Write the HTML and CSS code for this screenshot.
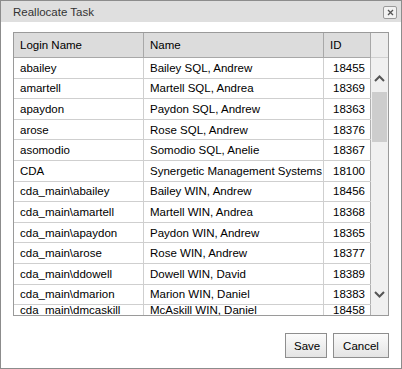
FILE: index.html
```html
<!DOCTYPE html>
<html>
<head>
<meta charset="utf-8">
<link rel="stylesheet" href="styles.css">
</head>
<body>
<div class="dialog">
  <div class="titlebar">
    <span class="title">Reallocate Task</span>
    <button class="close" aria-label="Close">
      <svg width="7" height="7" viewBox="0 0 7 7"><path d="M1 1L6 6M6 1L1 6" stroke="#555" stroke-width="1.3" fill="none"/></svg>
    </button>
  </div>
  <div class="content">
    <div class="grid">
      <div class="grid-main">
        <div class="row head">
          <div class="c c-login">Login Name</div>
          <div class="c c-name">Name</div>
          <div class="c c-id head-id">ID</div>
        </div>
        <div class="body">
          <div class="row"><div class="c c-login">abailey</div><div class="c c-name">Bailey SQL, Andrew</div><div class="c c-id">18455</div></div>
          <div class="row"><div class="c c-login">amartell</div><div class="c c-name">Martell SQL, Andrea</div><div class="c c-id">18369</div></div>
          <div class="row"><div class="c c-login">apaydon</div><div class="c c-name">Paydon SQL, Andrew</div><div class="c c-id">18363</div></div>
          <div class="row"><div class="c c-login">arose</div><div class="c c-name">Rose SQL, Andrew</div><div class="c c-id">18376</div></div>
          <div class="row"><div class="c c-login">asomodio</div><div class="c c-name">Somodio SQL, Anelie</div><div class="c c-id">18367</div></div>
          <div class="row"><div class="c c-login">CDA</div><div class="c c-name">Synergetic Management Systems</div><div class="c c-id">18100</div></div>
          <div class="row"><div class="c c-login">cda_main\abailey</div><div class="c c-name">Bailey WIN, Andrew</div><div class="c c-id">18456</div></div>
          <div class="row"><div class="c c-login">cda_main\amartell</div><div class="c c-name">Martell WIN, Andrea</div><div class="c c-id">18368</div></div>
          <div class="row"><div class="c c-login">cda_main\apaydon</div><div class="c c-name">Paydon WIN, Andrew</div><div class="c c-id">18365</div></div>
          <div class="row"><div class="c c-login">cda_main\arose</div><div class="c c-name">Rose WIN, Andrew</div><div class="c c-id">18377</div></div>
          <div class="row"><div class="c c-login">cda_main\ddowell</div><div class="c c-name">Dowell WIN, David</div><div class="c c-id">18389</div></div>
          <div class="row"><div class="c c-login">cda_main\dmarion</div><div class="c c-name">Marion WIN, Daniel</div><div class="c c-id">18383</div></div>
          <div class="row"><div class="c c-login">cda_main\dmcaskill</div><div class="c c-name">McAskill WIN, Daniel</div><div class="c c-id">18458</div></div>
        </div>
      </div>
      <div class="scrollbar">
        <div class="sb-head"></div>
        <div class="sb-arrow sb-up">
          <svg width="11" height="7" viewBox="0 0 11 7"><path d="M1 6L5.5 1.5L10 6" stroke="#555" stroke-width="2" fill="none"/></svg>
        </div>
        <div class="sb-thumb"></div>
        <div class="sb-space"></div>
        <div class="sb-arrow sb-down">
          <svg width="11" height="7" viewBox="0 0 11 7"><path d="M1 1L5.5 5.5L10 1" stroke="#555" stroke-width="2" fill="none"/></svg>
        </div>
      </div>
    </div>
    <div class="actions">
      <button class="btn btn-save">Save</button>
      <button class="btn btn-cancel">Cancel</button>
    </div>
  </div>
</div>
</body>
</html>
```
FILE: styles.css
```css
html, body {
  margin: 0;
  padding: 0;
  background: #ffffff;
}

.dialog {
  width: 402px;
  height: 369px;
  box-sizing: border-box;
  border: 1px solid #8c8c8c;
  background: #ffffff;
  font-family: "Liberation Sans", Arial, sans-serif;
  font-size: 11.5px;
  color: #000;
  display: flex;
  flex-direction: column;
}

.titlebar {
  height: 21px;
  background: #dfdfdf;
  display: flex;
  align-items: center;
  justify-content: space-between;
  padding: 0 4px 0 12px;
}

.title {
  color: #333;
  font-size: 11.5px;
}

.close {
  width: 14px;
  height: 13px;
  margin-top: 1px;
  padding: 0;
  border: 1px solid #9a9a9a;
  border-radius: 2px;
  background: #f2f2f2;
  display: flex;
  align-items: center;
  justify-content: center;
}

.content {
  flex: 1;
  padding: 10px 12px 10px 12px;
  display: flex;
  flex-direction: column;
}

.grid {
  height: 284px;
  box-sizing: border-box;
  border: 1px solid #9a9a9a;
  display: flex;
  overflow: hidden;
}

.grid-main {
  width: 357px;
  display: flex;
  flex-direction: column;
}

.row {
  display: flex;
  height: 20.6px;
  box-sizing: border-box;
  border-bottom: 1px solid #cfcfcf;
  flex-shrink: 0;
}

.row.head {
  height: 25px;
  background: #dcdcdc;
  border-bottom: 1px solid #a8a8a8;
}

.body {
  flex: 1;
  min-height: 0;
  overflow: hidden;
  display: flex;
  flex-direction: column;
}

.body .row:last-child {
  flex-shrink: 1;
  min-height: 0;
  border-bottom: none;
}

.c {
  box-sizing: border-box;
  border-right: 1px solid #cfcfcf;
  display: flex;
  align-items: center;
  white-space: nowrap;
  overflow: hidden;
  padding-left: 6px;
}

.head .c {
  border-right-color: #a8a8a8;
}

.c-login { width: 130px; }
.c-name { width: 180px; }
.c-id {
  width: 47px;
  justify-content: flex-end;
  padding-left: 0;
  padding-right: 5px;
  border-right-color: #b0b0b0;
}
.head .c-id.head-id {
  justify-content: flex-start;
  padding-left: 6px;
}

.scrollbar {
  width: 18px;
  background: #f0f0f0;
  display: flex;
  flex-direction: column;
  align-items: center;
}

.sb-head {
  height: 24px;
  width: 100%;
  border-bottom: 1px solid #d0d0d0;
  background: #ececec;
  flex-shrink: 0;
}

.sb-arrow {
  height: 12px;
  display: flex;
  align-items: center;
  justify-content: center;
  flex-shrink: 0;
}

.sb-up {
  margin-top: 14px;
}

.sb-thumb {
  width: 15px;
  height: 50px;
  margin-top: 8px;
  background: #cdcdcd;
  flex-shrink: 0;
}

.sb-space {
  flex: 1;
}

.sb-down {
  margin-bottom: 15px;
}

.actions {
  display: flex;
  justify-content: flex-end;
  gap: 6px;
  margin-top: 17px;
}

.btn {
  height: 25px;
  box-sizing: border-box;
  border: 1px solid #8e8e8e;
  background: linear-gradient(#fbfbfb, #e4e4e4);
  font-family: "Liberation Sans", Arial, sans-serif;
  font-size: 11.5px;
  color: #000;
  padding: 0 8px;
  border-radius: 0;
}

.btn-save { width: 42px; }
.btn-cancel { width: 56px; }
```
